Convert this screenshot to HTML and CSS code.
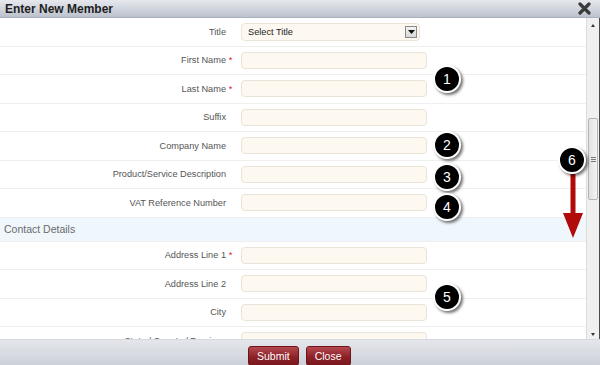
FILE: index.html
```html
<!DOCTYPE html>
<html lang="en">
<head>
    <meta charset="UTF-8">
    <title>Enter New Member</title>
    <link rel="stylesheet" href="styles.css">
</head>
<body>
    <div class="dialog">
        <div class="titlebar">
            <span class="title">Enter New Member</span>
            <svg class="close" width="13" height="13" viewBox="0 0 13 13">
                <path d="M2 2 L11 11 M11 2 L2 11" stroke="#3a3a3a" stroke-width="3.2" stroke-linecap="round"/>
            </svg>
        </div>

        <div class="body">
            <div class="form">
                <div class="row">
                    <div class="label">Title<span class="star"></span></div>
                    <div class="select">
                        <span>Select Title</span>
                        <span class="drop"><svg width="7" height="4" viewBox="0 0 7 4"><path d="M0 0 H7 L3.5 4 Z" fill="#111"/></svg></span>
                    </div>
                </div>
                <div class="row">
                    <div class="label">First Name<span class="star">*</span></div>
                    <div class="input"></div>
                </div>
                <div class="row">
                    <div class="label">Last Name<span class="star">*</span></div>
                    <div class="input"></div>
                </div>
                <div class="row">
                    <div class="label">Suffix<span class="star"></span></div>
                    <div class="input"></div>
                </div>
                <div class="row">
                    <div class="label">Company Name<span class="star"></span></div>
                    <div class="input"></div>
                </div>
                <div class="row">
                    <div class="label">Product/Service Description<span class="star"></span></div>
                    <div class="input"></div>
                </div>
                <div class="row">
                    <div class="label">VAT Reference Number<span class="star"></span></div>
                    <div class="input"></div>
                </div>
                <div class="section">Contact Details</div>
                <div class="row">
                    <div class="label">Address Line 1<span class="star">*</span></div>
                    <div class="input"></div>
                </div>
                <div class="row">
                    <div class="label">Address Line 2<span class="star"></span></div>
                    <div class="input"></div>
                </div>
                <div class="row">
                    <div class="label">City<span class="star"></span></div>
                    <div class="input"></div>
                </div>
                <div class="row">
                    <div class="label">State / County / Province<span class="star"></span></div>
                    <div class="input"></div>
                </div>
            </div>
            <div class="scrollbar">
                <span class="arrow up"></span>
                <div class="track">
                    <div class="thumb"><span class="grip"></span></div>
                </div>
                <span class="arrow down"></span>
            </div>
        </div>

        <div class="footer">
            <button class="btn">Submit</button>
            <button class="btn">Close</button>
        </div>

        <!-- numbered callouts -->
        <div class="callout" style="left:433px; top:65px;">1</div>
        <div class="callout" style="left:433px; top:131px;">2</div>
        <div class="callout" style="left:433px; top:163px;">3</div>
        <div class="callout" style="left:433px; top:193px;">4</div>
        <div class="callout" style="left:433px; top:283px;">5</div>
        <svg class="arrow-down" width="22" height="66" viewBox="0 0 22 66">
            <rect x="8.5" y="0" width="5" height="40" fill="#b10a0a"/>
            <path d="M1 39 H21 L11 64 Z" fill="#b10a0a"/>
        </svg>
        <div class="callout" style="left:558px; top:146px;">6</div>
    </div>
</body>
</html>
```

FILE: styles.css
```css
body {
    margin: 0;
    font-family: "Liberation Sans", Arial, sans-serif;
    background: #ffffff;
}
.dialog {
    position: relative;
    width: 600px;
    height: 365px;
    display: flex;
    flex-direction: column;
    overflow: hidden;
}
.titlebar {
    height: 18px;
    flex-shrink: 0;
    display: flex;
    align-items: center;
    justify-content: space-between;
    padding: 0 9px 0 5px;
    background: linear-gradient(#e6e8ed, #bcc2cd);
    border-bottom: 1px solid #a9b0bc;
    box-sizing: border-box;
}
.title {
    font-size: 12px;
    font-weight: bold;
    color: #1e1e1e;
}
.body {
    flex: 1;
    display: flex;
    min-height: 0;
}
.form {
    flex: 1;
    overflow: hidden;
}
.row {
    display: grid;
    grid-template-columns: 235px 186px;
    column-gap: 6px;
    align-items: center;
    height: 28.5px;
    box-sizing: border-box;
    border-bottom: 1px solid #efefef;
}
.label {
    display: flex;
    justify-content: flex-end;
    font-size: 9.2px;
    color: #555555;
}
.star {
    width: 9px;
    text-align: center;
    color: #e02020;
}
.input {
    height: 17px;
    box-sizing: border-box;
    background: #fdf9f1;
    border: 1px solid #e9e3d8;
    border-radius: 4px;
}
.select {
    width: 179px;
    height: 18px;
    box-sizing: border-box;
    display: flex;
    align-items: center;
    justify-content: space-between;
    padding: 0 2px 0 6px;
    background: #fdf9f1;
    border: 1px solid #e9e3d8;
    border-radius: 4px;
    font-size: 9.2px;
    color: #222222;
}
.drop {
    width: 12px;
    height: 12px;
    box-sizing: border-box;
    display: flex;
    align-items: center;
    justify-content: center;
    border: 1px solid #8a8a8a;
    background: linear-gradient(#f4f4f4, #d8d8d8);
}
.section {
    height: 24px;
    box-sizing: border-box;
    display: flex;
    align-items: center;
    padding-left: 4px;
    background: #eff7fd;
    border-bottom: 1px solid #efefef;
    font-size: 10.5px;
    color: #6a6a6a;
}
.scrollbar {
    width: 14px;
    flex-shrink: 0;
    display: flex;
    flex-direction: column;
    align-items: center;
    background: #f0f0f0;
    border-left: 1px solid #dcdcdc;
    border-right: 1px solid #4a4a4a;
    box-sizing: border-box;
    padding: 6px 0 3px;
}
.arrow {
    width: 0;
    height: 0;
    border-left: 2.5px solid transparent;
    border-right: 2.5px solid transparent;
}
.arrow.up {
    border-bottom: 3px solid #333;
}
.arrow.down {
    border-top: 3px solid #333;
}
.track {
    flex: 1;
    width: 100%;
    padding-top: 91px;
}
.thumb {
    height: 82px;
    margin: 0 1px;
    box-sizing: border-box;
    border: 1px solid #b4b4b4;
    border-radius: 2px;
    background: linear-gradient(90deg, #e2e2e2, #f3f3f3);
    display: flex;
    align-items: center;
    justify-content: center;
}
.grip {
    width: 5px;
    height: 5px;
    background: repeating-linear-gradient(#777 0 1px, transparent 1px 2px);
}
.footer {
    height: 26px;
    flex-shrink: 0;
    display: flex;
    gap: 7px;
    padding: 6px 0 0 248px;
    box-sizing: border-box;
    background: linear-gradient(#e4e6eb, #cdd1d9);
    border-top: 1px solid #d6d9de;
}
.btn {
    height: 20px;
    padding: 0 8px;
    border: 1px solid #6d1418;
    border-radius: 3px;
    background: linear-gradient(#b54850, #8c2228 55%, #7a171d);
    color: #ffffff;
    font-family: "Liberation Sans", Arial, sans-serif;
    font-size: 10.5px;
    line-height: 18px;
}
.callout {
    position: absolute;
    width: 24px;
    height: 24px;
    border: 2px solid #ffffff;
    border-radius: 50%;
    background: #000000;
    box-shadow: 2px 2px 3px rgba(0, 0, 0, 0.55);
    color: #ffffff;
    font-size: 14px;
    line-height: 24px;
    text-align: center;
}
.arrow-down {
    position: absolute;
    left: 562px;
    top: 174px;
}
```
